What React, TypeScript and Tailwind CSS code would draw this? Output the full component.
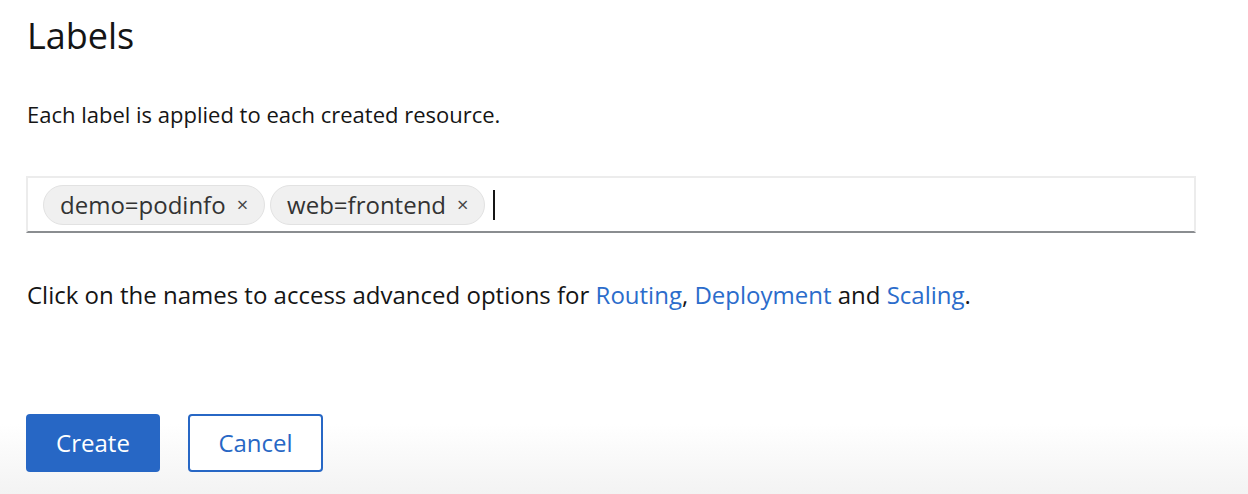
export default function App() {
  return (
    <main
      className="w-[1248px] h-[494px] flex flex-col bg-white text-[#151515] overflow-hidden"
      style={{ fontFamily: '"Open Sans", "Noto Sans", sans-serif' }}
    >
      <div className="flex-1 px-[27px]">
        <h2 className="mt-[13px] text-[36px] leading-[46px] font-medium">Labels</h2>

        <p className="mt-[41px] text-[22px] leading-[28px]">
          Each label is applied to each created resource.
        </p>

        <div className="mt-[48px] -ml-[1px] w-[1170px] h-[57px] border-2 border-[#ececec] border-b-[#8a8d90] flex items-center gap-[5px] pl-[15px]">
          <Chip text="demo=podinfo" />
          <Chip text="web=frontend" />
          <span className="ml-[3px] w-[2px] h-[30px] bg-[#151515]" />
        </div>

        <p className="mt-[47px] text-[24px] leading-[30px]">
          Click on the names to access advanced options for{' '}
          <a className="text-[#2b6ccb]">Routing</a>,{' '}
          <a className="text-[#2b6ccb]">Deployment</a> and{' '}
          <a className="text-[#2b6ccb]">Scaling</a>.
        </p>
      </div>

      <div className="h-[100px] px-[26px] pt-[20px] flex gap-[28px] bg-gradient-to-b from-white from-30% to-[#f3f3f3]">
        <button className="w-[134px] h-[58px] rounded-[4px] bg-[#2767c5] text-white text-[24px]">
          Create
        </button>
        <button className="w-[135px] h-[58px] rounded-[4px] border-2 border-[#2767c5] bg-white text-[#2767c5] text-[24px]">
          Cancel
        </button>
      </div>
    </main>
  );
}

function Chip({ text }: { text: string }) {
  return (
    <span className="h-[40px] flex items-center gap-[11px] rounded-full border border-[#e2e2e2] bg-[#f0f0f0] pl-[16px] pr-[16px] text-[24px] text-[#333]">
      {text}
      <span className="text-[20px] text-[#444]">×</span>
    </span>
  );
}
